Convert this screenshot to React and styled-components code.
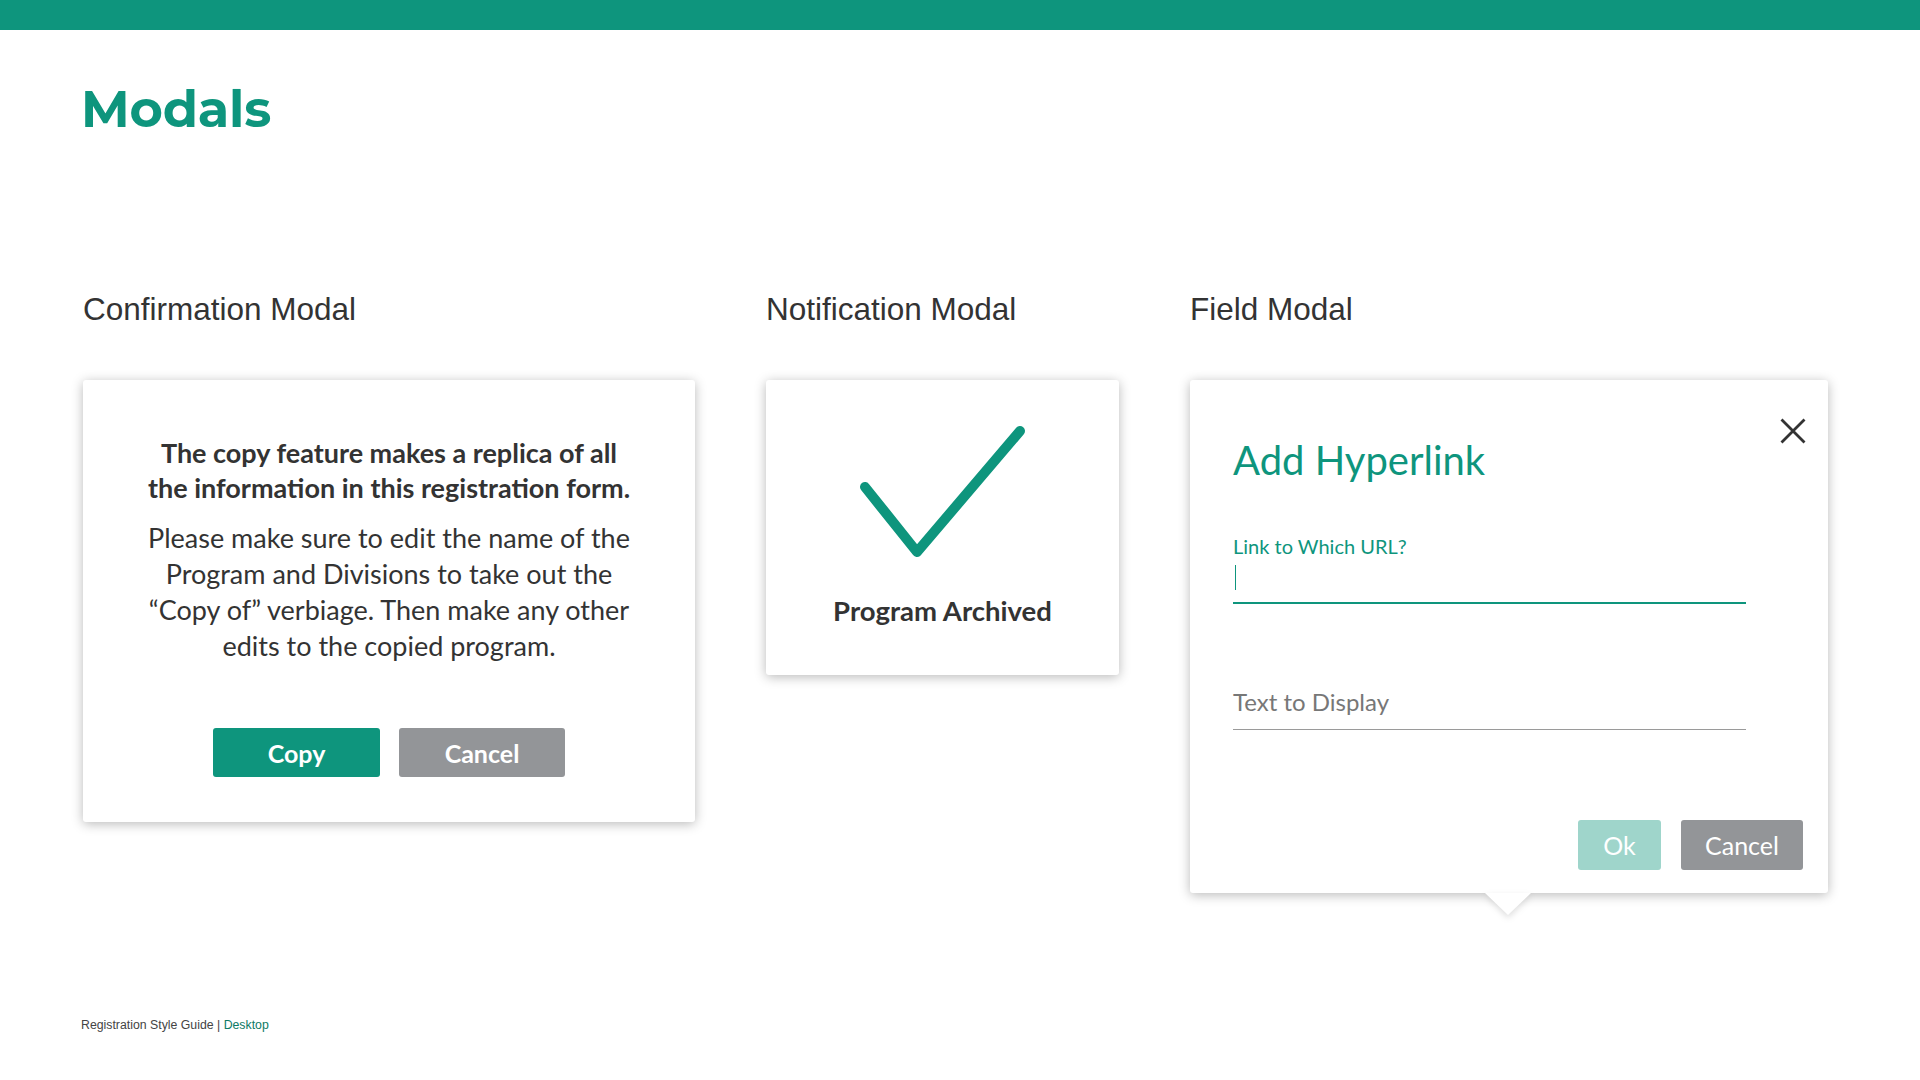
import React from 'react';
import styled, { createGlobalStyle } from 'styled-components';

const teal = '#0e957d';
const gray = '#939598';

const GlobalStyle = createGlobalStyle`
  html, body {
    margin: 0;
    padding: 0;
    background: #fff;
  }
  * { box-sizing: border-box; }
`;

const Page = styled.div`
  width: 1920px;
  height: 1080px;
  display: flex;
  flex-direction: column;
  overflow: hidden;
`;

const TopBar = styled.div`
  height: 30px;
  background: ${teal};
  flex-shrink: 0;
`;

const Content = styled.main`
  flex: 1;
  display: flex;
  flex-direction: column;
  padding: 54px 0 47px 83px;
`;

const Title = styled.h1`
  margin: 0 0 0 -2px;
  font-family: 'Montserrat', Inter, 'Open Sans', sans-serif;
  font-weight: 700;
  font-size: 51px;
  line-height: 51px;
  color: ${teal};
  letter-spacing: -0.2px;
`;

const Columns = styled.div`
  display: flex;
  align-items: flex-start;
  gap: 71px;
  margin-top: 159px;
`;

const Column = styled.section`
  display: flex;
  flex-direction: column;
  width: ${(p) => p.$w}px;
`;

const Heading = styled.h2`
  margin: 0 0 55px 0;
  font-family: 'Liberation Sans', Arial, sans-serif;
  font-weight: 400;
  font-size: 31.5px;
  line-height: 31px;
  color: #333;
`;

const Card = styled.div`
  position: relative;
  background: #fff;
  border-radius: 3px;
  box-shadow: 0 2px 12px rgba(0, 0, 0, 0.28);
  font-family: Lato, 'Open Sans', sans-serif;
  color: #333;
`;

const ConfirmCard = styled(Card)`
  height: 442px;
  padding: 55px 30px 45px;
  display: flex;
  flex-direction: column;
  align-items: center;
  text-align: center;
`;

const Lead = styled.p`
  margin: 0;
  font-weight: 700;
  font-size: 27px;
  line-height: 35px;
`;

const Body = styled.p`
  margin: 15px 0 0;
  font-weight: 400;
  font-size: 27px;
  line-height: 36px;
`;

const ButtonRow = styled.div`
  display: flex;
  gap: ${(p) => p.$gap || 19}px;
  margin-top: ${(p) => p.$top || 0}px;
  justify-content: ${(p) => p.$justify || 'center'};
`;

const Button = styled.button`
  border: none;
  border-radius: 3px;
  width: ${(p) => p.$w}px;
  height: ${(p) => p.$h || 49}px;
  background: ${(p) => p.$bg};
  color: #fff;
  font-family: Lato, 'Open Sans', sans-serif;
  font-size: 25px;
  font-weight: ${(p) => (p.$bold ? 700 : 400)};
  padding: 0;
  cursor: pointer;
`;

const NotifyCard = styled(Card)`
  height: 295px;
  padding-top: 40px;
  display: flex;
  flex-direction: column;
  align-items: center;
`;

const NotifyText = styled.div`
  margin-top: 30px;
  font-weight: 700;
  font-size: 27.5px;
  line-height: 32px;
`;

const FieldCard = styled(Card)`
  height: 513px;
  padding: 56px 25px 23px 43px;
  display: flex;
  flex-direction: column;

  &::after {
    content: '';
    position: absolute;
    left: 50%;
    bottom: -22px;
    margin-left: -24px;
    width: 0;
    height: 0;
    border-left: 23px solid transparent;
    border-right: 23px solid transparent;
    border-top: 22px solid #fff;
    filter: drop-shadow(0 3px 3px rgba(0, 0, 0, 0.13));
  }
`;

const Close = styled.button`
  position: absolute;
  top: 38px;
  right: 22px;
  width: 26px;
  height: 26px;
  padding: 0;
  border: none;
  background: none;
  cursor: pointer;
`;

const ModalTitle = styled.h3`
  margin: 0;
  font-weight: 400;
  font-size: 40px;
  line-height: 48px;
  color: ${teal};
`;

const Label = styled.label`
  margin-top: 50px;
  font-size: 20px;
  line-height: 24px;
  color: ${teal};
`;

const InputLine = styled.div`
  width: 513px;
  height: 46px;
  padding-top: 7px;
  border-bottom: 2px solid ${teal};
`;

const Caret = styled.div`
  width: 1px;
  height: 25px;
  background: ${teal};
  margin-left: 2px;
`;

const Placeholder = styled.div`
  width: 513px;
  margin-top: 83px;
  padding-bottom: 13px;
  border-bottom: 1.5px solid #9a9a9a;
  font-size: 24px;
  line-height: 29px;
  color: #777;
`;

const Footer = styled.footer`
  margin-top: auto;
  margin-left: -2px;
  font-family: 'Liberation Sans', Arial, sans-serif;
  font-size: 12.3px;
  line-height: 15px;
  color: #444;

  span {
    color: #0e7a65;
  }
`;

export default function App() {
  return (
    <Page>
      <GlobalStyle />
      <TopBar />
      <Content>
        <Title>Modals</Title>
        <Columns>
          <Column $w={612}>
            <Heading>Confirmation Modal</Heading>
            <ConfirmCard>
              <Lead>
                The copy feature makes a replica of all
                <br />
                the information in this registration form.
              </Lead>
              <Body>
                Please make sure to edit the name of the
                <br />
                Program and Divisions to take out the
                <br />
                “Copy of” verbiage. Then make any other
                <br />
                edits to the copied program.
              </Body>
              <ButtonRow $top={64}>
                <Button $w={167} $bg={teal} $bold>Copy</Button>
                <Button $w={166} $bg={gray} $bold>Cancel</Button>
              </ButtonRow>
            </ConfirmCard>
          </Column>

          <Column $w={353}>
            <Heading>Notification Modal</Heading>
            <NotifyCard>
              <svg width="175" height="145" viewBox="0 0 175 145" fill="none">
                <polyline
                  points="10,67 62,132 165,11"
                  stroke={teal}
                  strokeWidth="10"
                  strokeLinecap="round"
                  strokeLinejoin="round"
                />
              </svg>
              <NotifyText>Program Archived</NotifyText>
            </NotifyCard>
          </Column>

          <Column $w={638}>
            <Heading>Field Modal</Heading>
            <FieldCard>
              <Close aria-label="Close">
                <svg width="26" height="26" viewBox="0 0 26 26">
                  <path d="M1.5 1.5 L24.5 24.5 M24.5 1.5 L1.5 24.5" stroke="#333" strokeWidth="2.8" />
                </svg>
              </Close>
              <ModalTitle>Add Hyperlink</ModalTitle>
              <Label>Link to Which URL?</Label>
              <InputLine>
                <Caret />
              </InputLine>
              <Placeholder>Text to Display</Placeholder>
              <ButtonRow $top={90} $gap={20} $justify="flex-end">
                <Button $w={83} $h={50} $bg="#9fd5cb">Ok</Button>
                <Button $w={122} $h={50} $bg={gray}>Cancel</Button>
              </ButtonRow>
            </FieldCard>
          </Column>
        </Columns>
        <Footer>
          Registration Style Guide | <span>Desktop</span>
        </Footer>
      </Content>
    </Page>
  );
}
